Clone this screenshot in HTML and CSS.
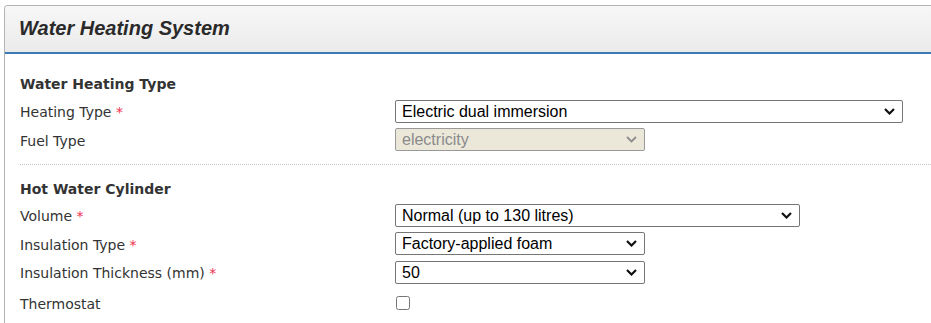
FILE: index.html
```html
<!DOCTYPE html>
<html lang="en">
<head>
    <meta charset="UTF-8" />
    <title>Water Heating System</title>
    <link rel="stylesheet" href="styles.css">
</head>
<body>
    <div class="panel">
        <div class="panel-header">
            <h2>Water Heating System</h2>
        </div>
        <div class="panel-body">
            <div class="section">
                <h3 class="section-title">Water Heating Type</h3>
                <div class="form-row">
                    <label>Heating Type <span class="req">*</span></label>
                    <span class="select-wrap wide">
                        <select>
                            <option>Electric dual immersion</option>
                        </select>
                        <svg class="chev" width="11" height="7" viewBox="0 0 11 7"><path d="M1 1 L5.5 5.5 L10 1" fill="none" stroke="#111" stroke-width="2.2"/></svg>
                    </span>
                </div>
                <div class="form-row">
                    <label>Fuel Type</label>
                    <span class="select-wrap small disabled">
                        <select disabled>
                            <option>electricity</option>
                        </select>
                        <svg class="chev" width="11" height="7" viewBox="0 0 11 7"><path d="M1 1 L5.5 5.5 L10 1" fill="none" stroke="#8c8c8c" stroke-width="1.8"/></svg>
                    </span>
                </div>
            </div>

            <div class="section divided">
                <h3 class="section-title">Hot Water Cylinder</h3>
                <div class="form-row">
                    <label>Volume <span class="req">*</span></label>
                    <span class="select-wrap medium">
                        <select>
                            <option>Normal (up to 130 litres)</option>
                        </select>
                        <svg class="chev" width="11" height="7" viewBox="0 0 11 7"><path d="M1 1 L5.5 5.5 L10 1" fill="none" stroke="#111" stroke-width="2.2"/></svg>
                    </span>
                </div>
                <div class="form-row">
                    <label>Insulation Type <span class="req">*</span></label>
                    <span class="select-wrap small">
                        <select>
                            <option>Factory-applied foam</option>
                        </select>
                        <svg class="chev" width="11" height="7" viewBox="0 0 11 7"><path d="M1 1 L5.5 5.5 L10 1" fill="none" stroke="#111" stroke-width="2.2"/></svg>
                    </span>
                </div>
                <div class="form-row">
                    <label>Insulation Thickness (mm) <span class="req">*</span></label>
                    <span class="select-wrap small">
                        <select>
                            <option>50</option>
                        </select>
                        <svg class="chev" width="11" height="7" viewBox="0 0 11 7"><path d="M1 1 L5.5 5.5 L10 1" fill="none" stroke="#111" stroke-width="2.2"/></svg>
                    </span>
                </div>
                <div class="form-row check-row">
                    <label>Thermostat</label>
                    <input type="checkbox" class="checkbox">
                </div>
            </div>
        </div>
    </div>
</body>
</html>
```

FILE: styles.css
```css
body,
html {
    margin: 0;
    background: #fff;
    overflow: hidden;
}

body {
    font-family: "DejaVu Sans", Verdana, sans-serif;
    color: #333;
}

.panel {
    margin: 5px 0 0 4px;
    border: 1px solid #b4b4b4;
    border-right: none;
    border-bottom: none;
    border-top-left-radius: 4px;
    height: 330px;
}

.panel-header {
    height: 46px;
    display: flex;
    align-items: center;
    padding-left: 14px;
    background: linear-gradient(#f7f7f7, #ebebeb);
    border-top-left-radius: 4px;
    border-bottom: 2px solid #3c7ab6;
}

.panel-header h2 {
    margin: 0 0 1px 0;
    font-family: "Liberation Sans", Arial, sans-serif;
    font-size: 20px;
    font-weight: bold;
    font-style: italic;
    color: #2a2a2a;
}

.panel-body {
    padding: 21px 0 0 15px;
}

.section-title {
    margin: 0 0 3px 0;
    font-size: 14px;
    line-height: 19px;
    font-weight: bold;
    color: #333;
}

.section.divided {
    margin-top: 10px;
    padding-top: 15px;
    border-top: 1px dotted #c4c4c4;
}

.section.divided .section-title {
    margin-bottom: 2px;
}

.form-row {
    display: flex;
    align-items: center;
    height: 28.5px;
}

.form-row label {
    width: 375px;
    flex: none;
    font-size: 14px;
    line-height: 18px;
    padding-top: 2px;
    color: #333;
}

.req {
    color: #f0304e;
}

.select-wrap {
    position: relative;
    display: inline-block;
    height: 23px;
}

.select-wrap.wide { width: 508px; }
.select-wrap.medium { width: 405px; }
.select-wrap.small { width: 250px; }

.select-wrap select {
    appearance: none;
    -webkit-appearance: none;
    width: 100%;
    height: 100%;
    margin: 0;
    padding: 0 0 0 6px;
    border: 1px solid #767676;
    border-radius: 2px;
    background: #fff;
    font-family: "Liberation Sans", Arial, sans-serif;
    font-size: 16px;
    color: #000;
    outline: none;
}

.select-wrap.disabled select {
    background: #ebe8da;
    border-color: #999;
    color: #8a8a8a;
    opacity: 1;
}

.chev {
    position: absolute;
    right: 8px;
    top: 8px;
    pointer-events: none;
}

.check-row {
    height: 32px;
}

.checkbox {
    width: 14px;
    height: 14px;
    margin: 0 0 0 1px;
}
```
